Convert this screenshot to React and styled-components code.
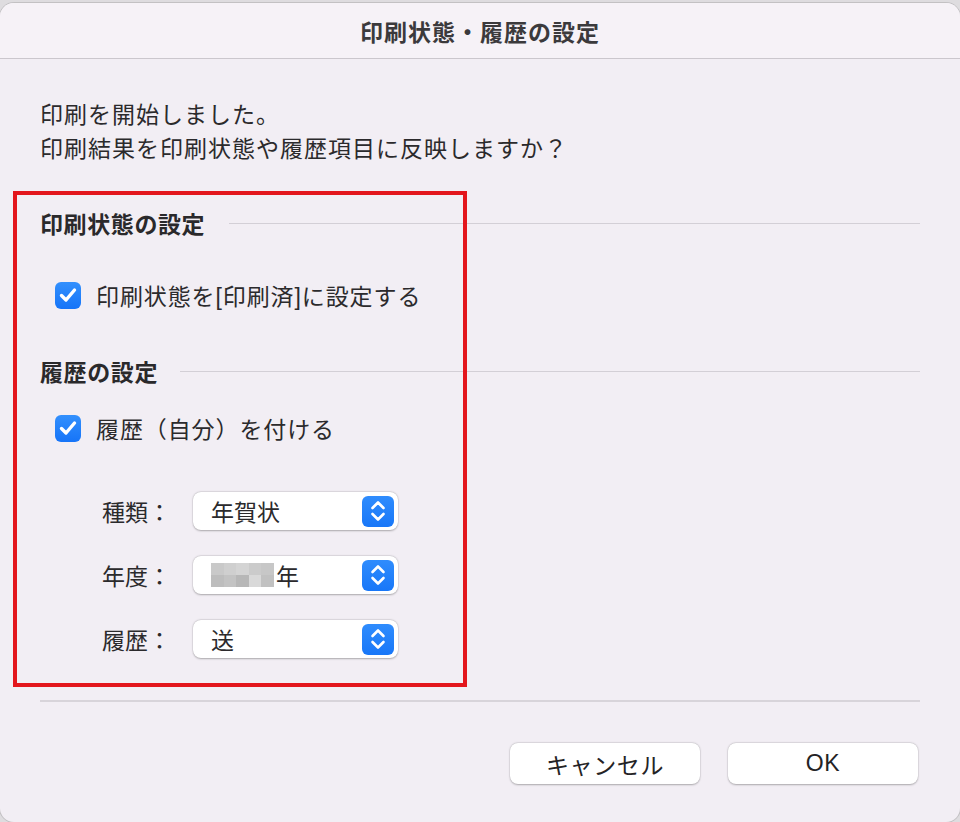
import styled, { createGlobalStyle } from "styled-components";

const GlobalStyle = createGlobalStyle`
    html, body {
        margin: 0;
        padding: 0;
        background: #dedcdf;
    }
    body {
        font-family: "Liberation Sans", "Noto Sans CJK JP", sans-serif;
        color: #262626;
    }
`;

const Dialog = styled.div`
    position: relative;
    margin-top: 3px;
    width: 960px;
    height: 819px;
    box-sizing: border-box;
    background: #f2eef4;
    border-radius: 14px;
    box-shadow: 0 0 0 1px rgba(0, 0, 0, 0.12);
    overflow: hidden;
    display: flex;
    flex-direction: column;
`;

const TitleBar = styled.div`
    height: 55px;
    flex-shrink: 0;
    display: flex;
    align-items: center;
    justify-content: center;
    background: #f6f2f7;
    border-bottom: 1px solid #cbc7cd;
`;

const Title = styled.h1`
    margin: 0;
    font-size: 23px;
    font-weight: 700;
    color: #3b3a3c;
    letter-spacing: 1px;
`;

const Body = styled.div`
    padding: 39px 40px 0;
    display: flex;
    flex-direction: column;
`;

const Message = styled.p`
    margin: 0;
    font-size: 23px;
    line-height: 34px;
    letter-spacing: 1px;
    color: #2b2a2c;
`;

const SectionHead = styled.div`
    display: flex;
    align-items: center;
    gap: ${p => p.$gap}px;
    height: 34px;
    margin-top: ${p => p.$top}px;

    &::after {
        content: "";
        flex: 1;
        height: 1px;
        background: #d3cfd6;
    }
`;

const SectionTitle = styled.h2`
    margin: 0;
    font-size: 23px;
    font-weight: 700;
    color: #2a292b;
    letter-spacing: 0.6px;
`;

const CheckRow = styled.label`
    display: flex;
    align-items: center;
    gap: 15px;
    height: 34px;
    margin: ${p => p.$top}px 0 0 15px;
    font-size: 23px;
    letter-spacing: 0.9px;
    color: #2b2a2c;
`;

const Box = styled.span`
    width: 26px;
    height: 27px;
    border-radius: 6px;
    background: linear-gradient(#3390fd, #1674f8);
    display: flex;
    align-items: center;
    justify-content: center;
`;

const Fields = styled.div`
    display: flex;
    flex-direction: column;
    gap: 26px;
    margin: 47px 0 0 62px;
`;

const FieldRow = styled.div`
    display: flex;
    align-items: center;
`;

const FieldLabel = styled.span`
    width: 91px;
    font-size: 23px;
    color: #2b2a2c;
`;

const Select = styled.div`
    width: 205px;
    height: 38px;
    box-sizing: border-box;
    padding: 0 4px 0 18px;
    display: flex;
    align-items: center;
    background: #fff;
    border-radius: 8px;
    box-shadow: 0 0.5px 2px rgba(0, 0, 0, 0.28), 0 0 0 0.5px rgba(0, 0, 0, 0.06);
`;

const SelectValue = styled.span`
    flex: 1;
    display: flex;
    align-items: center;
    font-size: 23px;
    color: #2b2a2c;
`;

const Stepper = styled.span`
    width: 32px;
    height: 31px;
    border-radius: 6px;
    background: linear-gradient(#2f8cfd, #1877f8);
    display: flex;
    align-items: center;
    justify-content: center;
`;

const Mosaic = styled.span`
    display: grid;
    grid-template-columns: repeat(5, 12.6px);
    grid-auto-rows: 12px;
    margin-right: 2px;
`;

const Cell = styled.span`
    background: ${p => p.$c};
`;

const Divider = styled.hr`
    margin: 42px 0 0;
    border: 0;
    height: 2px;
    background: #d8d4da;
`;

const Buttons = styled.div`
    display: flex;
    justify-content: flex-end;
    gap: 28px;
    margin: 41px 2px 0 0;
`;

const Button = styled.button`
    width: 190px;
    height: 41px;
    border: 0;
    border-radius: 8px;
    background: #fff;
    box-shadow: 0 0.5px 2px rgba(0, 0, 0, 0.28), 0 0 0 0.5px rgba(0, 0, 0, 0.06);
    font-family: inherit;
    font-size: 23px;
    color: #242325;
    letter-spacing: 0.6px;
`;

const Highlight = styled.div`
    position: absolute;
    left: 13px;
    top: 188px;
    width: 454px;
    height: 496px;
    box-sizing: border-box;
    border: 4px solid #e3161d;
    pointer-events: none;
`;

function Check() {
    return (
        <Box>
            <svg width="18" height="16" viewBox="0 0 18 16">
                <path d="M2.5 8.5 L7 13 L15.5 3" fill="none" stroke="#fff" strokeWidth="3.4" strokeLinecap="round" strokeLinejoin="round"/>
            </svg>
        </Box>
    );
}

function Arrows() {
    return (
        <Stepper>
            <svg width="18" height="26" viewBox="0 0 18 26">
                <path d="M3.5 10 L9 4.5 L14.5 10 M3.5 16 L9 21.5 L14.5 16" fill="none" stroke="#fff" strokeWidth="2.6" strokeLinecap="round" strokeLinejoin="round"/>
            </svg>
        </Stepper>
    );
}

const mosaic = ["#c9c9c9", "#cfcfcf", "#d4d4d4", "#cbcbcb", "#c7c7c7",
    "#bdbdbd", "#c3c3c3", "#b7b7b7", "#d9d9d9", "#c1c1c1"];

const fields = [
    {label: "種類：", value: "年賀状"},
    {label: "年度：", value: "年", blurred: true},
    {label: "履歴：", value: "送"},
];

export default function App() {
    return (
        <>
            <GlobalStyle/>
            <Dialog>
                <TitleBar>
                    <Title>印刷状態・履歴の設定</Title>
                </TitleBar>
                <Body>
                    <Message>
                        印刷を開始しました。<br/>
                        印刷結果を印刷状態や履歴項目に反映しますか？
                    </Message>

                    <SectionHead $top={40} $gap={24}>
                        <SectionTitle>印刷状態の設定</SectionTitle>
                    </SectionHead>
                    <CheckRow $top={38}>
                        <Check/>
                        印刷状態を[印刷済]に設定する
                    </CheckRow>

                    <SectionHead $top={42} $gap={22}>
                        <SectionTitle>履歴の設定</SectionTitle>
                    </SectionHead>
                    <CheckRow $top={23}>
                        <Check/>
                        履歴（自分）を付ける
                    </CheckRow>

                    <Fields>
                        {fields.map(f => (
                            <FieldRow key={f.label}>
                                <FieldLabel>{f.label}</FieldLabel>
                                <Select>
                                    <SelectValue>
                                        {f.blurred && (
                                            <Mosaic>
                                                {mosaic.map((c, i) => <Cell key={i} $c={c}/>)}
                                            </Mosaic>
                                        )}
                                        {f.value}
                                    </SelectValue>
                                    <Arrows/>
                                </Select>
                            </FieldRow>
                        ))}
                    </Fields>

                    <Divider/>

                    <Buttons>
                        <Button>キャンセル</Button>
                        <Button>OK</Button>
                    </Buttons>
                </Body>
                <Highlight/>
            </Dialog>
        </>
    );
}
